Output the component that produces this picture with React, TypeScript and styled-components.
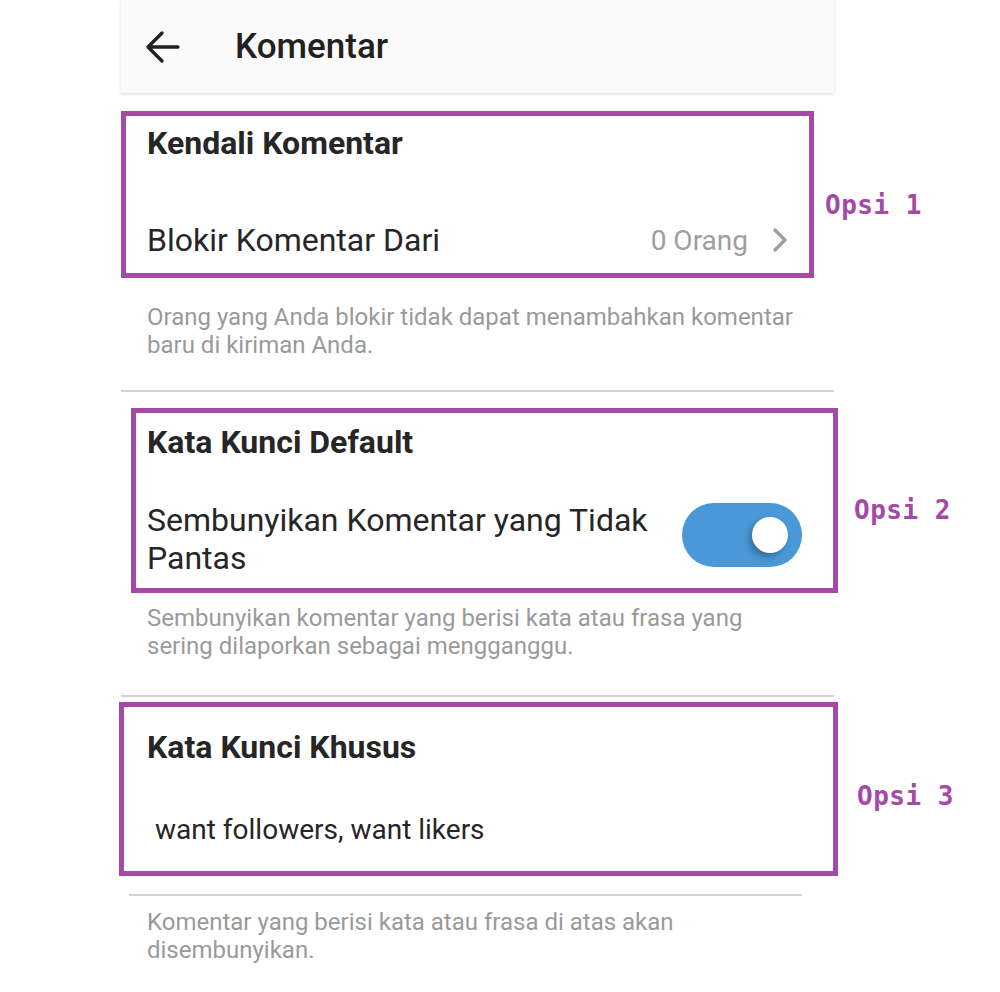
import React from 'react'
import styled, { createGlobalStyle } from 'styled-components'

const Global = createGlobalStyle`
  html, body {
    margin: 0;
    padding: 0;
    background: #ffffff;
  }
  body {
    font-family: Roboto, 'Noto Sans', Arial, sans-serif;
    color: #262626;
  }
`

const ACCENT = '#a449a5'

const Page = styled.div`
  width: 1000px;
  height: 992px;
  overflow: hidden;
  background: #fff;
`

const Screen = styled.div`
  margin-left: 121px;
  width: 713px;
  display: flex;
  flex-direction: column;
`

const Toolbar = styled.header`
  height: 93px;
  background: #fafafa;
  display: flex;
  align-items: center;
  padding-left: 24px;
  box-shadow: 0 1px 3px rgba(0, 0, 0, 0.14);
  position: relative;
  z-index: 1;
`

const BackButton = styled.div`
  width: 36px;
  height: 36px;
  display: flex;
  align-items: center;
  justify-content: center;
  margin-right: 54px;
`

const Title = styled.h1`
  margin: 0;
  font-size: 35px;
  font-weight: 500;
  color: #212121;
  line-height: 1;
`

// purple annotation frame drawn round each option block
const Frame = styled.section<{ $left: number; $width: number; $height: number; $top: number; $pl: number; $pr: number; $pt: number }>`
  position: relative;
  box-sizing: border-box;
  margin-left: ${p => p.$left}px;
  margin-top: ${p => p.$top}px;
  width: ${p => p.$width}px;
  height: ${p => p.$height}px;
  border: 5px solid ${ACCENT};
  padding: ${p => p.$pt}px ${p => p.$pr}px 0 ${p => p.$pl}px;
  display: flex;
  flex-direction: column;
`

const Tag = styled.span<{ $dx: number; $dy: number }>`
  position: absolute;
  left: calc(100% + ${p => p.$dx}px);
  top: ${p => p.$dy}px;
  font-family: 'DejaVu Sans Mono', 'Liberation Mono', monospace;
  font-weight: 700;
  font-size: 26px;
  line-height: 26px;
  color: ${ACCENT};
  white-space: nowrap;
  letter-spacing: 0.5px;
`

const Heading = styled.h2`
  margin: 0;
  font-size: 32px;
  font-weight: 700;
  line-height: 36px;
  color: #262626;
`

const Row = styled.div<{ $gap: number }>`
  margin-top: ${p => p.$gap}px;
  display: flex;
  align-items: center;
  justify-content: space-between;
`

const Label = styled.div<{ $indent?: number; $size?: number }>`
  font-size: ${p => p.$size || 32}px;
  line-height: 38px;
  color: #262626;
  margin-left: ${p => p.$indent || 0}px;
  max-width: 520px;
`

const Meta = styled.div`
  display: flex;
  align-items: center;
  gap: 22px;
  font-size: 28px;
  color: #9e9e9e;
`

const Hint = styled.p<{ $top: number }>`
  margin: ${p => p.$top}px 0 0;
  padding-left: 26px;
  width: 662px;
  font-size: 24px;
  line-height: 28px;
  color: #9a9a9a;
`

const Rule = styled.hr<{ $top: number; $left?: number; $width?: number }>`
  margin: ${p => p.$top}px 0 0 ${p => p.$left || 0}px;
  width: ${p => (p.$width ? p.$width + 'px' : '100%')};
  border: none;
  height: 2px;
  background: #d4d4d4;
`

const Switch = styled.div<{ $on: boolean }>`
  position: relative;
  flex: none;
  width: 120px;
  height: 64px;
  margin-bottom: 8px;
  border-radius: 32px;
  background: ${p => (p.$on ? '#4a98d8' : '#bdbdbd')};
`

const Knob = styled.span`
  position: absolute;
  top: 14px;
  right: 14px;
  width: 36px;
  height: 36px;
  border-radius: 50%;
  background: #fff;
  box-shadow: -3px 4px 6px rgba(0, 0, 0, 0.28);
`

const ArrowBack = () => (
  <svg width="36" height="36" viewBox="0 0 36 36" fill="none">
    <path d="M33 18H4M17 4L3 18l14 14" stroke="#212121" strokeWidth="3.4" strokeLinecap="round" strokeLinejoin="round" />
  </svg>
)

const Chevron = () => (
  <svg width="20" height="26" viewBox="0 0 20 26" fill="none">
    <path d="M5 3l10 10-10 10" stroke="#9e9e9e" strokeWidth="3.4" strokeLinecap="round" strokeLinejoin="round" />
  </svg>
)

export default function App() {
  return (
    <Page>
      <Global />
      <Screen>
        <Toolbar>
          <BackButton>
            <ArrowBack />
          </BackButton>
          <Title>Komentar</Title>
        </Toolbar>

        <Frame $left={0} $width={693} $height={167} $top={18} $pl={21} $pr={19} $pt={9}>
          <Heading>Kendali Komentar</Heading>
          <Row $gap={60}>
            <Label>Blokir Komentar Dari</Label>
            <Meta>
              0 Orang
              <Chevron />
            </Meta>
          </Row>
          <Tag $dx={16} $dy={76}>Opsi 1</Tag>
        </Frame>
        <Hint $top={25}>Orang yang Anda blokir tidak dapat menambahkan komentar baru di kiriman Anda.</Hint>
        <Rule $top={31} />

        <Frame $left={10} $width={707} $height={185} $top={16} $pl={11} $pr={31} $pt={11}>
          <Heading>Kata Kunci Default</Heading>
          <Row $gap={41}>
            <Label>Sembunyikan Komentar yang Tidak Pantas</Label>
            <Switch $on>
              <Knob />
            </Switch>
          </Row>
          <Tag $dx={21} $dy={84}>Opsi 2</Tag>
        </Frame>
        <Hint $top={11}>Sembunyikan komentar yang berisi kata atau frasa yang sering dilaporkan sebagai mengganggu.</Hint>
        <Rule $top={35} />

        <Frame $left={-2} $width={719} $height={174} $top={5} $pl={23} $pr={20} $pt={22}>
          <Heading>Kata Kunci Khusus</Heading>
          <Row $gap={46}>
            <Label $indent={8} $size={28}>want followers, want likers</Label>
          </Row>
          <Tag $dx={24} $dy={76}>Opsi 3</Tag>
        </Frame>
        <Rule $top={18} $left={8} $width={673} />
        <Hint $top={12}>Komentar yang berisi kata atau frasa di atas akan disembunyikan.</Hint>
      </Screen>
    </Page>
  )
}
